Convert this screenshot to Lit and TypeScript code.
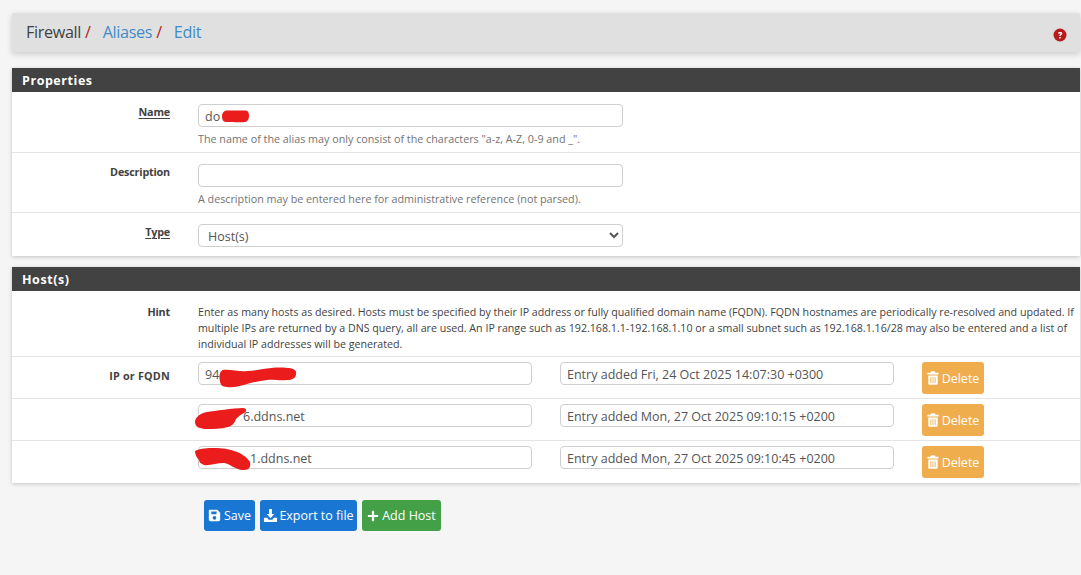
import { LitElement, html, css, svg } from "lit";
import { customElement } from "lit/decorators.js";

const trash = html`<svg class="ico" viewBox="0 0 14 16" width="12" height="14"><path fill="currentColor" d="M5 0h4l1 2h3.500v2H.5V2H4zM1.500 5h11v9.500a1.500 1.500 0 0 1-1.500 1.500H3a1.500 1.500 0 0 1-1.500-1.500z"/><path stroke="#f0ad4e" stroke-width="1" d="M4.500 7v7M7 7v7M9.500 7v7"/></svg>`;
const floppy = html`<svg class="ico" viewBox="0 0 16 16" width="13" height="13"><path fill="currentColor" fill-rule="evenodd" d="M2 1h9.500L15 4.500V13a2 2 0 0 1-2 2H3a2 2 0 0 1-2-2V2a1 1 0 0 1 1-1zM4 3v3.500h6.500V3zM8 8.500a2.300 2.300 0 1 0 0 4.600a2.300 2.300 0 0 0 0-4.600z"/></svg>`;
const download = html`<svg class="ico" viewBox="0 0 16 16" width="15" height="15"><path fill="currentColor" d="M6.500 1h3v5.500H12L8 11 4 6.500h2.500zM1 10.500h3.500L6 12.500h4l1.500-2H15V15H1z"/></svg>`;
const plus = html`<svg class="ico" viewBox="0 0 14 14" width="12" height="12"><path fill="currentColor" d="M5.700 1h2.600v4.700H13v2.600H8.300V13H5.700V8.300H1V5.700h4.700z"/></svg>`;

function scribble(cls: string, d: string, w: number, h: number) {
  return html`<svg class="scribble ${cls}" width=${w} height=${h} viewBox="0 0 ${w} ${h}">${svg`<path d=${d} fill="#ea1c1c"/>`}</svg>`;
}

@customElement("app-root")
export class AppRoot extends LitElement {
  static styles = css`
    :host { display: block; width: 1081px; height: 575px; overflow: hidden; background: #f5f5f5; font-family: "Open Sans", "Noto Sans", sans-serif; color: #424242; }
    .page { display: flex; flex-direction: column; padding: 13px 1px 0 12px; }
    .crumbs { height: 39px; background: #e0e0e0; box-shadow: 0 2px 6px rgba(0,0,0,.18); border-radius: 2px; display: flex; align-items: center; padding: 0 13px 2px 14px; box-sizing: border-box; font-size: 16.2px; letter-spacing: -.35px; }
    .crumbs a { color: #428bca; }
    .crumbs i { color: #b71c1c; font-style: normal; margin: 0 12px 0 4px; }
    .crumbs .help { margin-left: auto; margin-top: 6px; }
    .panel { background: #fff; box-shadow: 0 1px 4px rgba(0,0,0,.2); }
    .panel.first { margin-top: 16px; }
    .panel.second { margin-top: 11px; }
    .head { height: 24px; background: #424242; color: #fff; font-weight: 700; font-size: 12.5px; letter-spacing: .55px; line-height: 26px; padding-left: 10px; }
    .row { display: grid; grid-template-columns: 158px 1fr; column-gap: 28px; border-bottom: 1px solid #e4e4e4; box-sizing: border-box; }
    .row:last-child { border-bottom: 0; }
    .r-name { height: 61px; padding-top: 12px; }
    .r-desc { height: 60px; padding-top: 11px; }
    .r-type { height: 43px; padding-top: 11px; }
    .r-hint { height: 66px; padding-top: 13px; }
    .r-host { height: 42px; padding-top: 5px; }
    .r-host.last { border-bottom: 0; }
    .label { text-align: right; font-weight: 700; font-size: 10.8px; letter-spacing: -.2px; line-height: 16px; }
    .label.req span { text-decoration: underline; text-underline-offset: 2px; }
    .r-host .label { padding-top: 6px; letter-spacing: .2px; }
    .field { position: relative; }
    input, select { box-sizing: border-box; display: block; height: 23px; border: 1px solid #cfcfcf; border-radius: 4px; background: #fff; color: #555; font: 12.5px "Open Sans", sans-serif; padding: 2px 6px 0; outline: none; }
    .wide { width: 425px; }
    select { padding-left: 5px; }
    .help-text { font-size: 10.75px; color: #737373; line-height: 14px; margin-top: 5px; white-space: nowrap; }
    .hint { font-size: 10.66px; line-height: 16px; color: #424242; white-space: nowrap; }
    .hosts { display: flex; align-items: flex-start; }
    .host { width: 334px; }
    .entry { width: 334px; margin-left: 28px; }
    .pad-6 { padding-left: 44px; }
    .pad-1 { padding-left: 51px; }
    .del { margin-left: 28px; width: 62px; height: 32px; box-sizing: border-box; border-radius: 3px; background: #f0ad4e; color: #fff; font-size: 12.5px; display: flex; align-items: center; justify-content: center; gap: 3px; }
    .scribble { position: absolute; pointer-events: none; overflow: visible; }
    .s-name { left: 24px; top: 6px; }
    .s-h1 { left: 22px; top: 6px; }
    .s-h2 { left: -3px; top: 4px; }
    .s-h3 { left: -3px; top: 2px; }
    .actions { display: flex; gap: 5px; margin: 17px 0 0 192px; }
    .btn { height: 31px; box-sizing: border-box; border-radius: 3px; color: #fff; font-size: 12.5px; display: flex; align-items: center; justify-content: center; gap: 3px; }
    .blue { background: #1976d2; }
    .green { background: #43a047; }
    .b-save { width: 51px; }
    .b-export { width: 97px; gap: 1px; }
    .b-add { width: 79px; }
    .ico { flex: none; display: block; }
  `;

  private hostRow(label: string, value: string, entry: string, cls: string, mark: unknown, last = false) {
    return html`<div class="row r-host ${last ? "last" : ""}">
      <div class="label">${label}</div>
      <div class="hosts">
        <div class="field">
          <input class="host ${cls}" .value=${value} />
          ${mark}
        </div>
        <input class="entry" .value=${entry} />
        <div class="del">${trash}<span>Delete</span></div>
      </div>
    </div>`;
  }

  render() {
    return html`<div class="page">
      <div class="crumbs">
        <span>Firewall</span><i>/</i><a>Aliases</a><i>/</i><a>Edit</a>
        <svg class="help" width="14" height="14" viewBox="0 0 14 14"><circle cx="7" cy="7" r="6.500" fill="#b71c1c"/><path d="M4.800 5.300C5 3.800 9.300 3.500 9.300 5.600c0 1.400-1.700 1.400-1.700 2.500H6.200c0-1.900 1.600-1.800 1.600-2.500 0-.7-1.400-.6-1.700.2zM6.200 9h1.500v1.500H6.200z" fill="#fff"/></svg>
      </div>

      <section class="panel first">
        <div class="head">Properties</div>
        <div class="row r-name">
          <div class="label req"><span>Name</span></div>
          <div>
            <div class="field">
              <input class="wide" .value=${"do"} />
              ${scribble("s-name", "M5 0.500h18c3 0 4 2 4 5s-1 6-4 6.500c-5 .6-11-.3-19 0C1 12 0 9 0 6S2 .5 5 .5z", 28, 13)}
            </div>
            <div class="help-text">The name of the alias may only consist of the characters "a-z, A-Z, 0-9 and _".</div>
          </div>
        </div>
        <div class="row r-desc">
          <div class="label">Description</div>
          <div>
            <input class="wide" />
            <div class="help-text">A description may be entered here for administrative reference (not parsed).</div>
          </div>
        </div>
        <div class="row r-type">
          <div class="label req"><span>Type</span></div>
          <div><select class="wide"><option>Host(s)</option></select></div>
        </div>
      </section>

      <section class="panel second">
        <div class="head">Host(s)</div>
        <div class="row r-hint">
          <div class="label">Hint</div>
          <div class="hint">Enter as many hosts as desired. Hosts must be specified by their IP address or fully qualified domain name (FQDN). FQDN hostnames are periodically re-resolved and updated. If<br />multiple IPs are returned by a DNS query, all are used. An IP range such as 192.168.1.1-192.168.1.10 or a small subnet such as 192.168.1.16/28 may also be entered and a list of<br />individual IP addresses will be generated.</div>
        </div>
        ${this.hostRow("IP or FQDN", "94", "Entry added Fri, 24 Oct 2025 14:07:30 +0300", "",
          scribble("s-h1", "M3 2C10 1 20 4 27 3C33 3 38 2 43 1C50 0 60 -1 67 0C73 0 77 2 76 6C76 10 72 12 67 12C60 13 53 11 47 12C40 13 33 14 27 16C20 18 13 20 7 19C2 19 0 16 0 13C-1 10 -1 3 3 2z", 77, 20))}
        ${this.hostRow("", "6.ddns.net", "Entry added Mon, 27 Oct 2025 09:10:15 +0200", "pad-6",
          scribble("s-h2", "M12 4C20 3 38 0 48 0C52 0 52 4 49 5C45 7 43 9 41 11C39 16 37 18 33 19C26 21 18 21 12 21C5 21 0 19 0 14C0 9 6 5 12 4z", 52, 22))}
        ${this.hostRow("", "1.ddns.net", "Entry added Mon, 27 Oct 2025 09:10:45 +0200", "pad-1",
          scribble("s-h3", "M0 3C6 0 13 0 19 0C28 0 34 1 39 3C46 5 52 9 55 14C56 19 54 22 49 22C42 23 36 16 29 15C22 15 14 18 9 17C6 16 4 14 4 12C1 9 0 6 0 3z", 57, 23), true)}
      </section>

      <div class="actions">
        <div class="btn blue b-save">${floppy}<span>Save</span></div>
        <div class="btn blue b-export">${download}<span>Export to file</span></div>
        <div class="btn green b-add">${plus}<span>Add Host</span></div>
      </div>
    </div>`;
  }
}
